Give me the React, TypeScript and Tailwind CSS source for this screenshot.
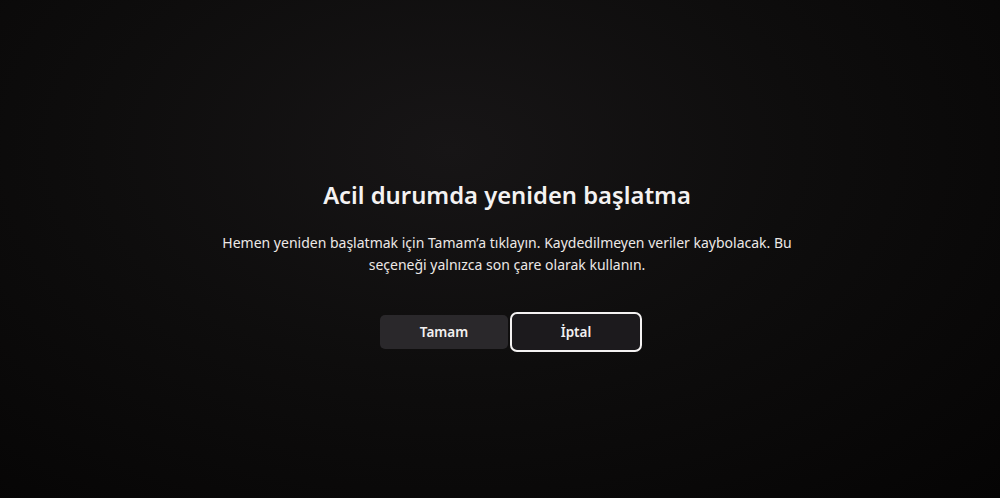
import React from "react";

export default function App() {
  return (
    <div
      className="w-full h-[498px] flex flex-col items-center pt-[178px] pl-[14px] text-white bg-[radial-gradient(ellipse_at_45%_30%,#171516_0%,#0e0d0d_45%,#050404_100%)]"
      style={{ fontFamily: '"Noto Sans", "Open Sans", sans-serif' }}
    >
      <h1 className="text-[23.8px] leading-[34px] font-semibold text-[#f4f2f2]">
        Acil durumda yeniden başlatma
      </h1>
      <p className="mt-[20px] max-w-[590px] text-center text-[14px] leading-[22px] text-[#ece8e6]">
        Hemen yeniden başlatmak için Tamam’a tıklayın. Kaydedilmeyen veriler kaybolacak. Bu
        seçeneği yalnızca son çare olarak kullanın.
      </p>
      <div className="mt-[36px] ml-[8px] flex items-center gap-[2px]">
        <button className="w-[128px] h-[34px] rounded-[5px] bg-[#2a282b] text-[13.5px] font-semibold text-[#f2f0f0]">
          Tamam
        </button>
        <button className="w-[132px] h-[40px] rounded-[7px] border-2 border-[#f4f2f2] bg-[#1c1a1d] text-[13.5px] font-semibold text-[#f2f0f0]">
          İptal
        </button>
      </div>
    </div>
  );
}
